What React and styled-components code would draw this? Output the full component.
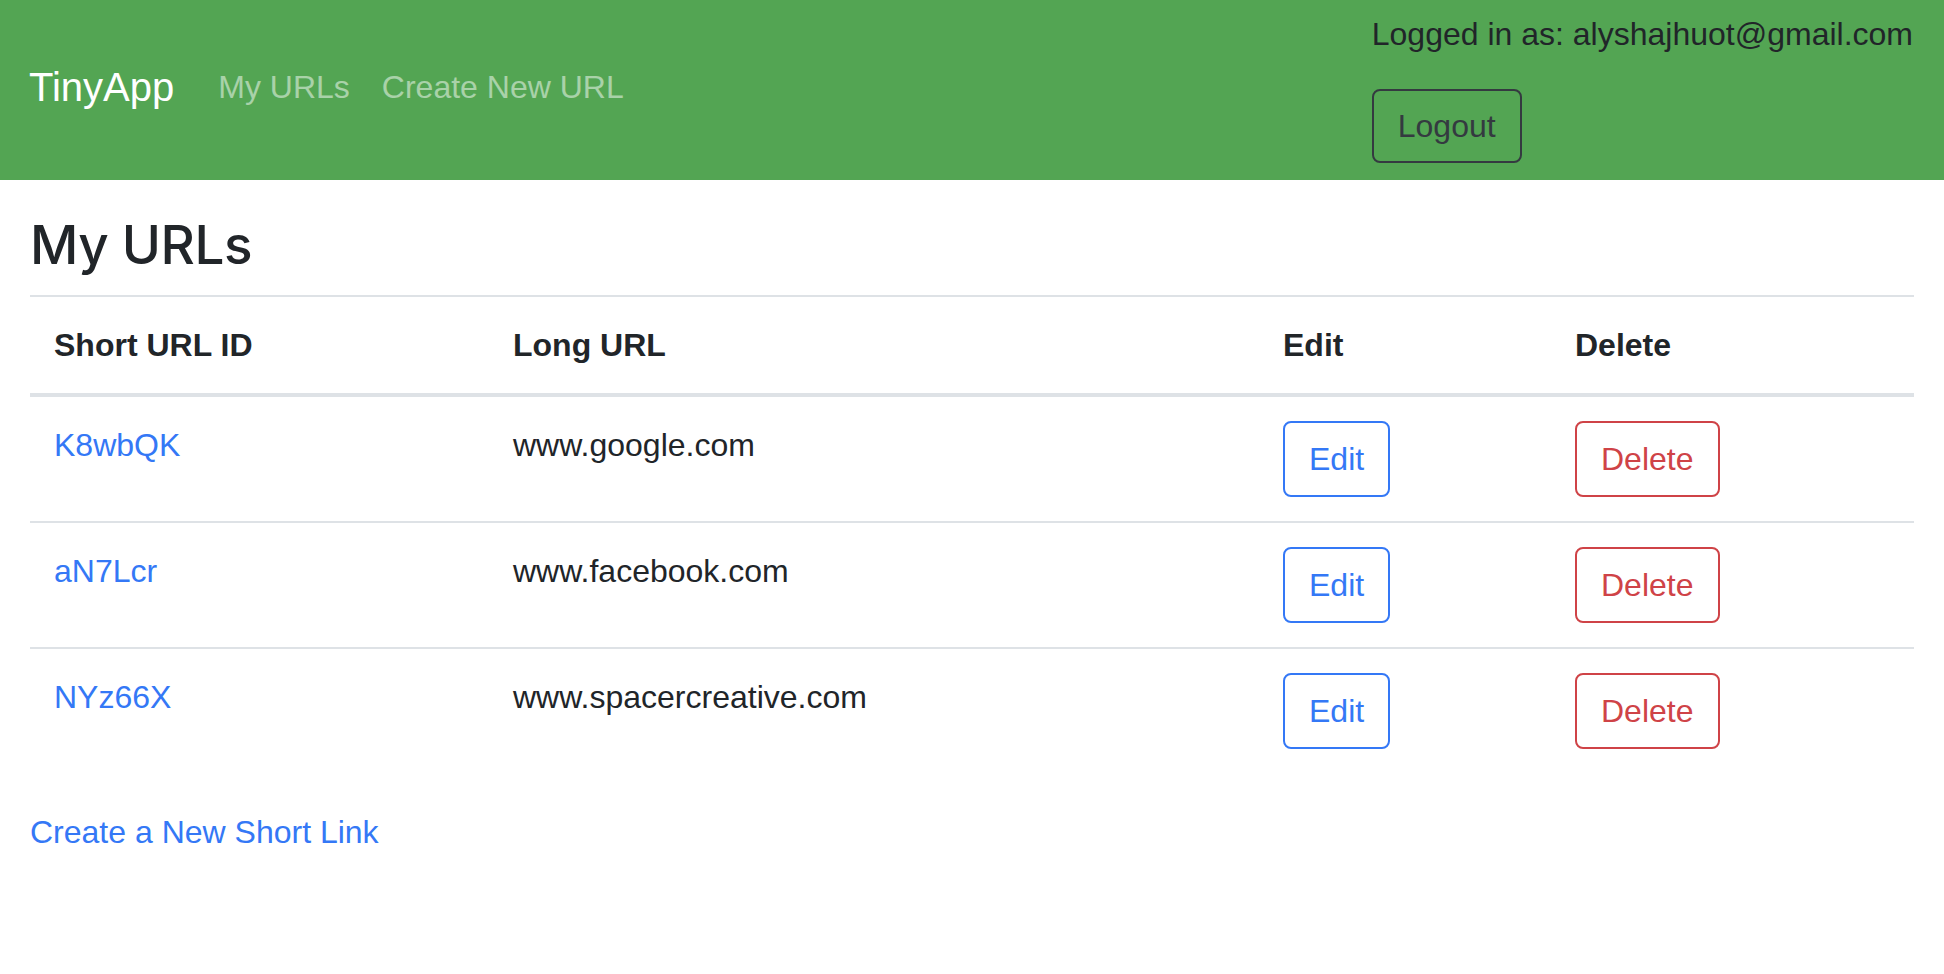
import React from 'react';
import styled, { createGlobalStyle } from 'styled-components';

const GlobalStyle = createGlobalStyle`
  body {
    margin: 0;
    font-family: "Liberation Sans", Arial, sans-serif;
    font-size: 32px;
    line-height: 1.5;
    color: #212529;
    background: #ffffff;
  }
`;

const NavBar = styled.nav`
  display: flex;
  align-items: center;
  background: #53a553;
  padding: 10px 31px 17px 29px;
`;

const Brand = styled.a`
  font-size: 40px;
  color: #ffffff;
  margin-right: 28px;
  text-decoration: none;
`;

const NavLinks = styled.div`
  display: flex;
`;

const NavLink = styled.a`
  padding: 0 16px;
  color: rgba(255, 255, 255, 0.5);
  text-decoration: none;
`;

const UserBox = styled.div`
  margin-left: auto;
`;

const UserText = styled.p`
  margin: 0 0 31px;
  color: #212529;
`;

const OutlineButton = styled.button`
  font-family: inherit;
  font-size: 32px;
  line-height: 48px;
  padding: ${(p) => (p.$tight ? '11px 24px' : '12px 24px')};
  border: 2px solid ${(p) => p.$color};
  border-radius: 8px;
  background: transparent;
  color: ${(p) => p.$color};
  cursor: pointer;
`;

const Main = styled.main`
  padding: 0 30px;
`;

const Heading = styled.h3`
  font-family: Inter, "Liberation Sans", sans-serif;
  font-size: 53px;
  font-weight: 500;
  letter-spacing: -0.5px;
  line-height: 67px;
  margin: 32px 0 16px;
`;

const Table = styled.table`
  width: 100%;
  table-layout: fixed;
  border-collapse: collapse;
  margin-bottom: 35px;
`;

const Th = styled.th`
  box-sizing: border-box;
  text-align: left;
  font-weight: bold;
  padding: 24px;
  vertical-align: bottom;
  border-top: 2px solid #dee2e6;
  border-bottom: 4px solid #dee2e6;
  width: ${(p) => p.$w}px;
`;

const Td = styled.td`
  padding: 24px;
  vertical-align: top;
  border-top: 2px solid #dee2e6;
`;

const Link = styled.a`
  color: #3478f6;
  text-decoration: none;
`;

const urls = [
  { id: 'K8wbQK', long: 'www.google.com' },
  { id: 'aN7Lcr', long: 'www.facebook.com' },
  { id: 'NYz66X', long: 'www.spacercreative.com' },
];

const App = () => {
  return (
    <>
      <GlobalStyle />
      <NavBar>
        <Brand href="#">TinyApp</Brand>
        <NavLinks>
          <NavLink href="#">My URLs</NavLink>
          <NavLink href="#">Create New URL</NavLink>
        </NavLinks>
        <UserBox>
          <UserText>Logged in as: alyshajhuot@gmail.com</UserText>
          <OutlineButton $color="#343a40" $tight>Logout</OutlineButton>
        </UserBox>
      </NavBar>
      <Main>
        <Heading>My URLs</Heading>
        <Table>
          <thead>
            <tr>
              <Th $w={459}>Short URL ID</Th>
              <Th $w={770}>Long URL</Th>
              <Th $w={292}>Edit</Th>
              <Th $w={363}>Delete</Th>
            </tr>
          </thead>
          <tbody>
            {urls.map((url) => (
              <tr key={url.id}>
                <Td><Link href="#">{url.id}</Link></Td>
                <Td>{url.long}</Td>
                <Td><OutlineButton $color="#3478f6">Edit</OutlineButton></Td>
                <Td><OutlineButton $color="#cf4347">Delete</OutlineButton></Td>
              </tr>
            ))}
          </tbody>
        </Table>
        <Link href="#">Create a New Short Link</Link>
      </Main>
    </>
  );
};

export default App;
